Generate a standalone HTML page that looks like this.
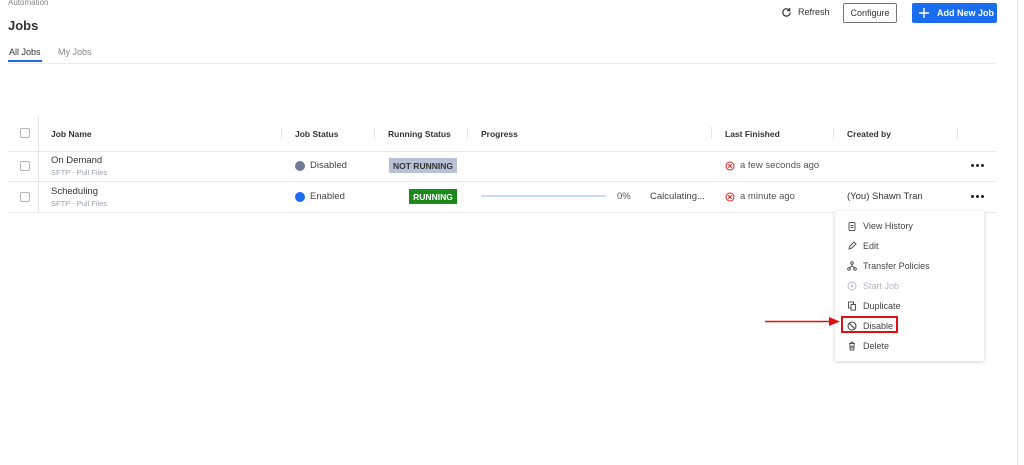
<!DOCTYPE html>
<html><head><style>
*{margin:0;padding:0;box-sizing:border-box}
body{width:1024px;height:465px;background:#fff;font-family:"Liberation Sans",sans-serif;position:relative;overflow:hidden;color:#222}
.a{position:absolute;white-space:nowrap}
.h{font-size:8.5px;font-weight:bold;color:#333}
.t{font-size:9.5px;color:#333}
.s{font-size:7.5px;color:#9aa0ab}
.hl{position:absolute;height:1px;background:#e8e8ec}
.vl{position:absolute;width:1px;background:#e4e4e8}
.cb{position:absolute;width:10px;height:10px;border:1px solid #b5b5bb;border-radius:2px;left:20px}
.mi{position:absolute;left:863px;font-size:9px;color:#444}
.ic{position:absolute;left:847px}
.dots{position:absolute;width:14px;height:4px}
.dots i{position:absolute;top:0;width:3px;height:3px;border-radius:50%;background:#222}
.btn{position:absolute;display:flex;align-items:center;justify-content:center;border-radius:2px;font-size:9px}
</style></head><body>
<div class="a" style="left:8px;top:-2px;font-size:8px;color:#888">Automation</div>
<div class="a" style="left:8px;top:18px;font-size:13px;font-weight:bold;color:#333">Jobs</div>
<div class="a" style="left:9px;top:47px;font-size:9px;color:#333">All Jobs</div>
<div style="position:absolute;left:8px;top:60px;width:34px;height:2px;background:#1f6be8"></div>
<div class="a" style="left:58px;top:47px;font-size:9px;color:#888">My Jobs</div>
<div class="hl" style="left:8px;top:63px;width:988px;background:#eee"></div>
<div style="position:absolute;left:1017px;top:0;width:1px;height:465px;background:#e4e4e8"></div>

<svg class="a" style="left:781px;top:7px" width="11" height="11" viewBox="0 0 12 12"><path d="M10 6a4 4 0 1 1-1.2-2.9" fill="none" stroke="#333" stroke-width="1.3"/><path d="M9.5 1v3h-3" fill="none" stroke="#333" stroke-width="1.3"/></svg>
<div class="a" style="left:798px;top:7px;font-size:9px;color:#333">Refresh</div>
<div class="btn" style="left:843px;top:3px;width:54px;height:20px;border:1px solid #777;color:#333">Configure</div>
<div class="btn" style="left:912px;top:3px;width:85px;height:20px;background:#1a6cf0;color:#fff;font-weight:bold;justify-content:flex-start;padding-left:25px">Add New Job</div>
<svg class="a" style="left:919px;top:8px" width="10" height="10" viewBox="0 0 10 10"><path d="M5 0v10M0 5h10" stroke="#fff" stroke-width="1.4"/></svg>

<div class="vl" style="left:38px;top:116px;height:96px"></div>
<div class="cb" style="top:128px"></div>
<div class="a h" style="left:51px;top:129px">Job Name</div>
<div class="vl" style="left:281px;top:127px;height:12px"></div>
<div class="a h" style="left:295px;top:129px">Job Status</div>
<div class="vl" style="left:374px;top:127px;height:12px"></div>
<div class="a h" style="left:388px;top:129px">Running Status</div>
<div class="vl" style="left:467px;top:127px;height:12px"></div>
<div class="a h" style="left:481px;top:129px">Progress</div>
<div class="vl" style="left:711px;top:127px;height:12px"></div>
<div class="a h" style="left:725px;top:129px">Last Finished</div>
<div class="vl" style="left:833px;top:127px;height:12px"></div>
<div class="a h" style="left:847px;top:129px">Created by</div>
<div class="vl" style="left:957px;top:127px;height:12px"></div>
<div class="hl" style="left:8px;top:151px;width:988px"></div>

<div class="cb" style="top:161px"></div>
<div class="a t" style="left:51px;top:155px">On Demand</div>
<div class="a s" style="left:51px;top:168px">SFTP - Pull Files</div>
<div class="a" style="left:295px;top:161px;width:10px;height:10px;border-radius:50%;background:#6e7a96"></div>
<div class="a t" style="left:310px;top:160px;color:#444">Disabled</div>
<div class="btn" style="left:389px;top:158px;width:68px;height:15px;background:#b8c1d6;font-size:8.5px;font-weight:bold;color:#333;border-radius:0">NOT RUNNING</div>
<svg class="a" style="left:725px;top:161px" width="10" height="10" viewBox="0 0 10 10"><circle cx="5" cy="5" r="4" fill="none" stroke="#d33" stroke-width="1.1"/><path d="M3.3 3.3l3.4 3.4M6.7 3.3l-3.4 3.4" stroke="#d33" stroke-width="1.1"/></svg>
<div class="a t" style="left:740px;top:160px;color:#555">a few seconds ago</div>
<div class="dots" style="left:971px;top:164px"><i style="left:0"></i><i style="left:5px"></i><i style="left:10px"></i></div>
<div class="hl" style="left:8px;top:181px;width:988px"></div>

<div class="cb" style="top:192px"></div>
<div class="a t" style="left:51px;top:186px">Scheduling</div>
<div class="a s" style="left:51px;top:199px">SFTP - Pull Files</div>
<div class="a" style="left:295px;top:192px;width:10px;height:10px;border-radius:50%;background:#1a6cf0"></div>
<div class="a t" style="left:310px;top:191px;color:#444">Enabled</div>
<div class="btn" style="left:409px;top:189px;width:48px;height:15px;background:#1b8a1b;font-size:8.5px;font-weight:bold;color:#fff;border-radius:0">RUNNING</div>
<div class="a" style="left:481px;top:195px;width:125px;height:2px;background:#c5def6"></div>
<div class="a t" style="left:617px;top:191px;color:#555">0%</div>
<div class="a t" style="left:650px;top:191px;color:#444">Calculating...</div>
<svg class="a" style="left:725px;top:192px" width="10" height="10" viewBox="0 0 10 10"><circle cx="5" cy="5" r="4" fill="none" stroke="#d33" stroke-width="1.1"/><path d="M3.3 3.3l3.4 3.4M6.7 3.3l-3.4 3.4" stroke="#d33" stroke-width="1.1"/></svg>
<div class="a t" style="left:740px;top:191px;color:#555">a minute ago</div>
<div class="a t" style="left:847px;top:191px;color:#333">(You) Shawn Tran</div>
<div class="dots" style="left:971px;top:195px"><i style="left:0"></i><i style="left:5px"></i><i style="left:10px"></i></div>
<div class="hl" style="left:8px;top:212px;width:988px"></div>

<div class="a" style="left:835px;top:211px;width:149px;height:150px;background:#fff;box-shadow:0 1px 4px rgba(0,0,0,.18);border-radius:2px"></div>
<svg class="ic" style="top:221px" width="10" height="10" viewBox="0 0 10 10"><rect x="2" y="1.5" width="6" height="8" rx="1" fill="none" stroke="#555"/><path d="M3.5 4.5h3M3.5 6.5h3" stroke="#555"/></svg>
<div class="mi" style="top:221px">View History</div>
<svg class="ic" style="top:241px" width="10" height="10" viewBox="0 0 10 10"><path d="M2 8l1-3 4-4 2 2-4 4z" fill="none" stroke="#555"/></svg>
<div class="mi" style="top:241px">Edit</div>
<svg class="ic" style="top:261px" width="10" height="10" viewBox="0 0 10 10"><circle cx="5" cy="2" r="1.3" fill="none" stroke="#555"/><circle cx="2" cy="8" r="1.3" fill="none" stroke="#555"/><circle cx="8" cy="8" r="1.3" fill="none" stroke="#555"/><path d="M5 3.3v2M2 6.7l3-1.4 3 1.4" fill="none" stroke="#555"/></svg>
<div class="mi" style="top:261px">Transfer Policies</div>
<svg class="ic" style="top:281px" width="10" height="10" viewBox="0 0 10 10"><circle cx="5" cy="5" r="4" fill="none" stroke="#bbc"/><path d="M4 3.3v3.4l2.6-1.7z" fill="#bbc"/></svg>
<div class="mi" style="top:281px;color:#b5b9c8">Start Job</div>
<svg class="ic" style="top:301px" width="10" height="10" viewBox="0 0 10 10"><rect x="1.5" y="1" width="5" height="6" fill="none" stroke="#555"/><rect x="4" y="3.5" width="4.5" height="5.5" fill="#fff" stroke="#555"/></svg>
<div class="mi" style="top:301px">Duplicate</div>
<svg class="ic" style="top:321px" width="10" height="10" viewBox="0 0 10 10"><circle cx="5" cy="5" r="4" fill="none" stroke="#444" stroke-width="1.1"/><path d="M2.2 2.2l5.6 5.6" stroke="#444" stroke-width="1.1"/></svg>
<div class="mi" style="top:321px">Disable</div>
<div class="a" style="left:841px;top:316px;width:57px;height:17px;border:2px solid #e01010"></div>
<svg class="ic" style="top:341px" width="10" height="10" viewBox="0 0 10 10"><path d="M2 2.5h6M4 2.5V1.3h2v1.2M2.8 2.5l.4 6.5h3.6l.4-6.5M4.2 4.5v3M5.8 4.5v3" fill="none" stroke="#555"/></svg>
<div class="mi" style="top:341px">Delete</div>
<svg class="a" style="left:765px;top:316px" width="78" height="11" viewBox="0 0 78 11"><path d="M0 5.5h66" stroke="#e01010" stroke-width="1.5"/><path d="M64 1l11 4.5-11 4.5z" fill="#e01010"/></svg>
</body></html>
